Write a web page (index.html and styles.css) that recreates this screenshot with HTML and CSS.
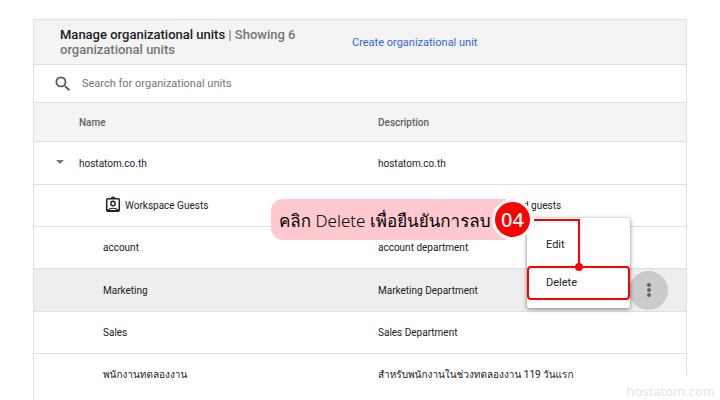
FILE: index.html
```html
<!DOCTYPE html>
<html lang="en">

<head>
    <meta charset="UTF-8">
    <meta name="viewport" content="width=device-width, initial-scale=1.0">
    <title>Manage organizational units</title>
    <link rel="stylesheet" href="styles.css">
</head>

<body>
    <div class="panel">
        <div class="head">
            <h1>Manage organizational units <span>| Showing 6 organizational units</span></h1>
            <a href="#">Create organizational unit</a>
        </div>
        <div class="search">
            <label for="search">
                <svg width="20" height="20" viewBox="0 0 24 24" fill="#505357" role="img" aria-label="Search">
                    <path d="M15.5 14h-.79l-.28-.27A6.47 6.47 0 0 0 16 9.5 6.5 6.5 0 1 0 9.5 16c1.61 0 3.09-.59 4.23-1.57l.27.28v.79l5 4.99L20.49 19l-4.99-5zm-6 0C7.01 14 5 11.99 5 9.5S7.01 5 9.5 5 14 7.01 14 9.5 11.99 14 9.5 14z"/>
                </svg>
            </label>
            <input type="text" id="search" placeholder="Search for organizational units">
        </div>
        <table class="units">
            <thead>
                <tr>
                    <th class="name">Name</th>
                    <th>Description</th>
                    <th class="more"></th>
                </tr>
            </thead>
            <tbody>
                <tr>
                    <td class="name root"><button class="toggle" aria-label="Collapse"></button>hostatom.co.th</td>
                    <td>hostatom.co.th</td>
                    <td></td>
                </tr>
                <tr>
                    <td class="name sub">
                        <div class="guest">
                            <svg width="18" height="22" viewBox="0 0 18 22" fill="none" stroke="#202124">
                                <rect x="3.700" y="3.700" width="12.600" height="12.600" rx="1" stroke-width="1.500"/>
                                <path d="M8 3.500a2 1.500 0 0 1 4 0z" fill="#202124"/>
                                <circle cx="10" cy="8.500" r="2.200" stroke-width="1.400"/>
                                <path d="M4.500 15.500c2.500-3 8.500-3 11 0z" stroke-width="1.200"/>
                            </svg>
                            Workspace Guests
                        </div>
                    </td>
                    <td class="tail">d guests</td>
                    <td></td>
                </tr>
                <tr>
                    <td class="name sub">account</td>
                    <td>account department</td>
                    <td></td>
                </tr>
                <tr class="active">
                    <td class="name sub">Marketing</td>
                    <td>Marketing Department</td>
                    <td>
                        <button class="dots" aria-label="More options">
                            <svg width="18" height="18" viewBox="0 0 18 18" fill="#5f6368">
                                <circle cx="9" cy="4" r="2"/>
                                <circle cx="9" cy="9" r="2"/>
                                <circle cx="9" cy="14" r="2"/>
                            </svg>
                        </button>
                    </td>
                </tr>
                <tr>
                    <td class="name sub">Sales</td>
                    <td>Sales Department</td>
                    <td></td>
                </tr>
                <tr>
                    <td class="name sub">พนักงานทดลองงาน</td>
                    <td>สำหรับพนักงานในช่วงทดลองงาน 119 วันแรก</td>
                    <td></td>
                </tr>
            </tbody>
        </table>

        <div class="menu">
            <button>Edit</button>
            <button class="marked">Delete</button>
        </div>

        <div class="step">
            <p>คลิก Delete เพื่อยืนยันการลบ</p>
            <b>04</b>
        </div>
        <div class="line"></div>
    </div>
    <div class="watermark">hostatom.com</div>
</body>

</html>
```

FILE: styles.css
```css
* {
    margin: 0;
    padding: 0;
    box-sizing: border-box;
}

body {
    font-family: Roboto, Loma, Waree, "Noto Sans Thai Looped", sans-serif;
    color: #202124;
    background: #fff;
    overflow: hidden;
}

button {
    border: 0;
    background: none;
    font-family: inherit;
    color: inherit;
}

.panel {
    position: relative;
    margin: 19px 33px 0;
    border: 1px solid #dfdfdf;
    border-radius: 2px;
}

.head {
    display: flex;
    align-items: center;
    gap: 32px;
    height: 45px;
    padding: 0 26px;
    background: #f4f4f4;
    border-bottom: 1px solid #dfdfdf;
}

.head h1 {
    width: 260px;
    font-size: 13px;
    line-height: 15px;
    font-weight: 500;
}

.head h1 span {
    color: #757575;
}

.head a {
    font-size: 11px;
    color: #3367d6;
    text-decoration: none;
}

.search {
    display: flex;
    align-items: center;
    gap: 9px;
    height: 38px;
    padding: 0 19px;
    border-bottom: 1px solid #dfdfdf;
}

.search svg {
    display: block;
}

.search input {
    flex: 1;
    border: 0;
    outline: 0;
    font-family: inherit;
    font-size: 11px;
}

.search input::placeholder {
    color: #757575;
}

.units {
    width: 100%;
    table-layout: fixed;
    border-collapse: separate;
    border-spacing: 0;
    font-size: 10px;
}

.units th,
.units td {
    height: 42px;
    text-align: left;
    white-space: nowrap;
    border-bottom: 1px solid #dfdfdf;
}

.units th {
    height: 39px;
    font-weight: 500;
    color: #616161;
    background: #f4f4f4;
}

.units .name {
    width: 344px;
    padding-left: 45px;
}

.units .more {
    width: 57px;
}

.units .root {
    position: relative;
    height: 43px;
}

.units .sub {
    padding-left: 69px;
}

.units .tail {
    padding-left: 145px;
}

.units .active td {
    height: 43px;
    background: #eee;
}

.units tr:last-child td {
    height: 48px;
    padding-bottom: 6px;
}

.toggle {
    position: absolute;
    left: 22px;
    top: 18px;
    border: 4px solid transparent;
    border-top-color: #757575;
    border-bottom: 0;
}

.guest {
    display: flex;
    align-items: center;
    gap: 4px;
}

.dots {
    display: flex;
    align-items: center;
    justify-content: center;
    width: 39px;
    height: 39px;
    border-radius: 50%;
    background: #cbcbcb;
}

.menu {
    position: absolute;
    right: 56px;
    top: 198px;
    width: 103px;
    height: 90px;
    padding: 8px 0;
    background: #fff;
    border-radius: 2px;
    box-shadow: 0 1px 4px rgba(0, 0, 0, .5);
}

.menu button {
    display: block;
    width: 100%;
    height: 36px;
    padding-left: 19px;
    text-align: left;
    font-size: 11px;
}

.menu .marked {
    height: 34px;
    margin-top: 4px;
    border: 2px solid #f00;
    border-radius: 4px;
    padding-left: 17px;
    padding-bottom: 2px;
}

/* คำอธิบายขั้นตอน */
.step {
    position: absolute;
    right: 153px;
    top: 179px;
    width: 262px;
    height: 41px;
}

.step p {
    width: 235px;
    height: 41px;
    padding-left: 8px;
    line-height: 43px;
    font-family: "Noto Sans", Loma, Waree, "Noto Sans Thai Looped", sans-serif;
    font-weight: 300;
    font-size: 17px;
    white-space: nowrap;
    color: #000;
    background: #ffc9cf;
    border-radius: 12px 0 0 12px;
}

.step b {
    position: absolute;
    right: 0;
    top: 0;
    width: 41px;
    height: 41px;
    border: 3px solid #fff;
    border-radius: 50%;
    background: #f00;
    color: #fff;
    font-family: "Noto Sans", sans-serif;
    font-weight: 500;
    font-size: 20px;
    line-height: 36px;
    text-align: center;
}

.line {
    position: absolute;
    right: 106px;
    top: 199px;
    width: 46px;
    height: 48px;
    border-top: 2px solid #f00;
    border-right: 2px solid #f00;
}

.line::after {
    content: "";
    position: absolute;
    right: -5px;
    bottom: -4px;
    width: 8px;
    height: 8px;
    border-radius: 50%;
    background: #f00;
}

.watermark {
    position: fixed;
    right: 0;
    bottom: 0;
    padding: 7px 5px 0 20px;
    height: 25px;
    line-height: 18px;
    font-family: "Noto Sans", sans-serif;
    font-size: 13px;
    color: #e4e4e4;
    background: #fff;
}
```
